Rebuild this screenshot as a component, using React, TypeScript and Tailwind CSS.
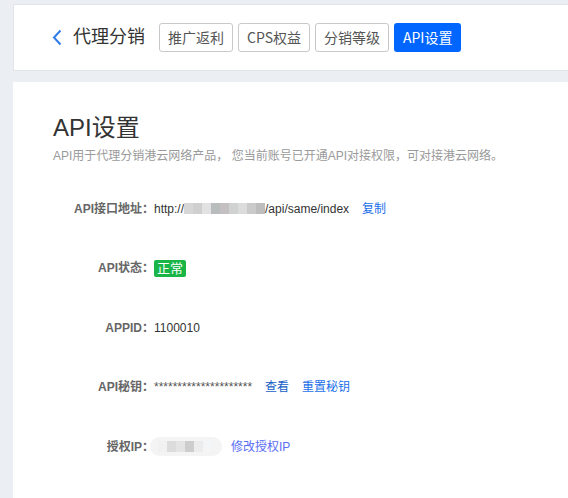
import React from "react";

const font = { fontFamily: '"Liberation Sans", "Noto Sans CJK SC", sans-serif' };
const tabFont = { fontFamily: '"Noto Sans CJK SC", sans-serif' };

const tabs = ["推广返利", "CPS权益", "分销等级", "API设置"];

const urlBlur = ["#d6d6d6", "#cfcfcf", "#e2e2e2", "#b9bcbc", "#c4c0c2", "#d0d2d2", "#dcdcdc", "#cacaca", "#bdbdbd"];
const ipBlur = ["#f1f1f1", "#dcdcdc", "#e4e4e4", "#cdcdcd", "#ececec", "#f3f5f7"];

function Row({ label, children }: { label: string; children: React.ReactNode }) {
  return (
    <div className="flex h-[59.5px] items-center">
      <div className="w-[101px] text-right text-[12px] font-semibold text-[#666]">{label}</div>
      <div className="flex items-center text-[12px] text-[#333]">{children}</div>
    </div>
  );
}

export default function App() {
  return (
    <div className="min-h-screen w-[568px] overflow-hidden bg-[#ebeef2] pl-[13px] pt-[4px]" style={font}>
      {/* HEADER */}
      <div className="flex h-[67px] items-center border border-r-0 border-[#e1e4e9] bg-white pl-[38px]">
        <svg width="10" height="17" viewBox="0 0 10 17" className="mr-[11px]">
          <path d="M8.5 1.5 L2 8.5 L8.5 15.5" fill="none" stroke="#2f7bea" strokeWidth="2" />
        </svg>
        <span className="mr-[14px] text-[18px] text-[#333]">代理分销</span>
        <div className="flex gap-[5px]" style={tabFont}>
          {tabs.map((t, i) =>
            i === 3 ? (
              <div key={t} className="flex h-[29px] items-center rounded-[3px] bg-[#0066ff] px-[9px] text-[14px] text-white">
                {t}
              </div>
            ) : (
              <div
                key={t}
                className="flex h-[29px] items-center rounded-[3px] border border-[#c9c9c9] bg-white px-[8px] text-[14px] text-[#555]"
              >
                {t}
              </div>
            )
          )}
        </div>
      </div>

      {/* CONTENT */}
      <div className="mt-[11px] min-h-[420px] bg-white pl-[40px] pt-[30px]">
        <h1 className="text-[24px] leading-[32px] text-[#333]">API设置</h1>
        <p className="mt-[3px] text-[12px] text-[#9a9a9a]">
          API用于代理分销港云网络产品， 您当前账号已开通API对接权限，可对接港云网络。
        </p>

        <div className="mt-[14px]">
          <Row label="API接口地址：">
            <span>http://</span>
            <div className="flex h-[11px]">
              {urlBlur.map((c, i) => (
                <div key={i} className="h-full w-[9px]" style={{ background: c }} />
              ))}
            </div>
            <span>/api/same/index</span>
            <span className="ml-[13px] text-[#1a6fe8]">复制</span>
          </Row>
          <Row label="API状态：">
            <span className="rounded-[2px] bg-[#1ab547] px-[3px] text-[13px] leading-[17px] text-white">正常</span>
          </Row>
          <Row label="APPID：">
            <span>1100010</span>
          </Row>
          <Row label="API秘钥：">
            <span className="text-[#555]">*********************</span>
            <span className="ml-[13px] text-[#1460c4]">查看</span>
            <span className="ml-[13px] text-[#1a6fe8]">重置秘钥</span>
          </Row>
          <Row label="授权IP：">
            <div className="-ml-[4px] flex h-[19px] w-[72px] items-center overflow-hidden rounded-full bg-[#f4f4f4] px-[8px]">
              {ipBlur.map((c, i) => (
                <div key={i} className="h-[11px] w-[9px]" style={{ background: c }} />
              ))}
            </div>
            <span className="ml-[9px] text-[#5b6ef5]">修改授权IP</span>
          </Row>
        </div>
      </div>
    </div>
  );
}
